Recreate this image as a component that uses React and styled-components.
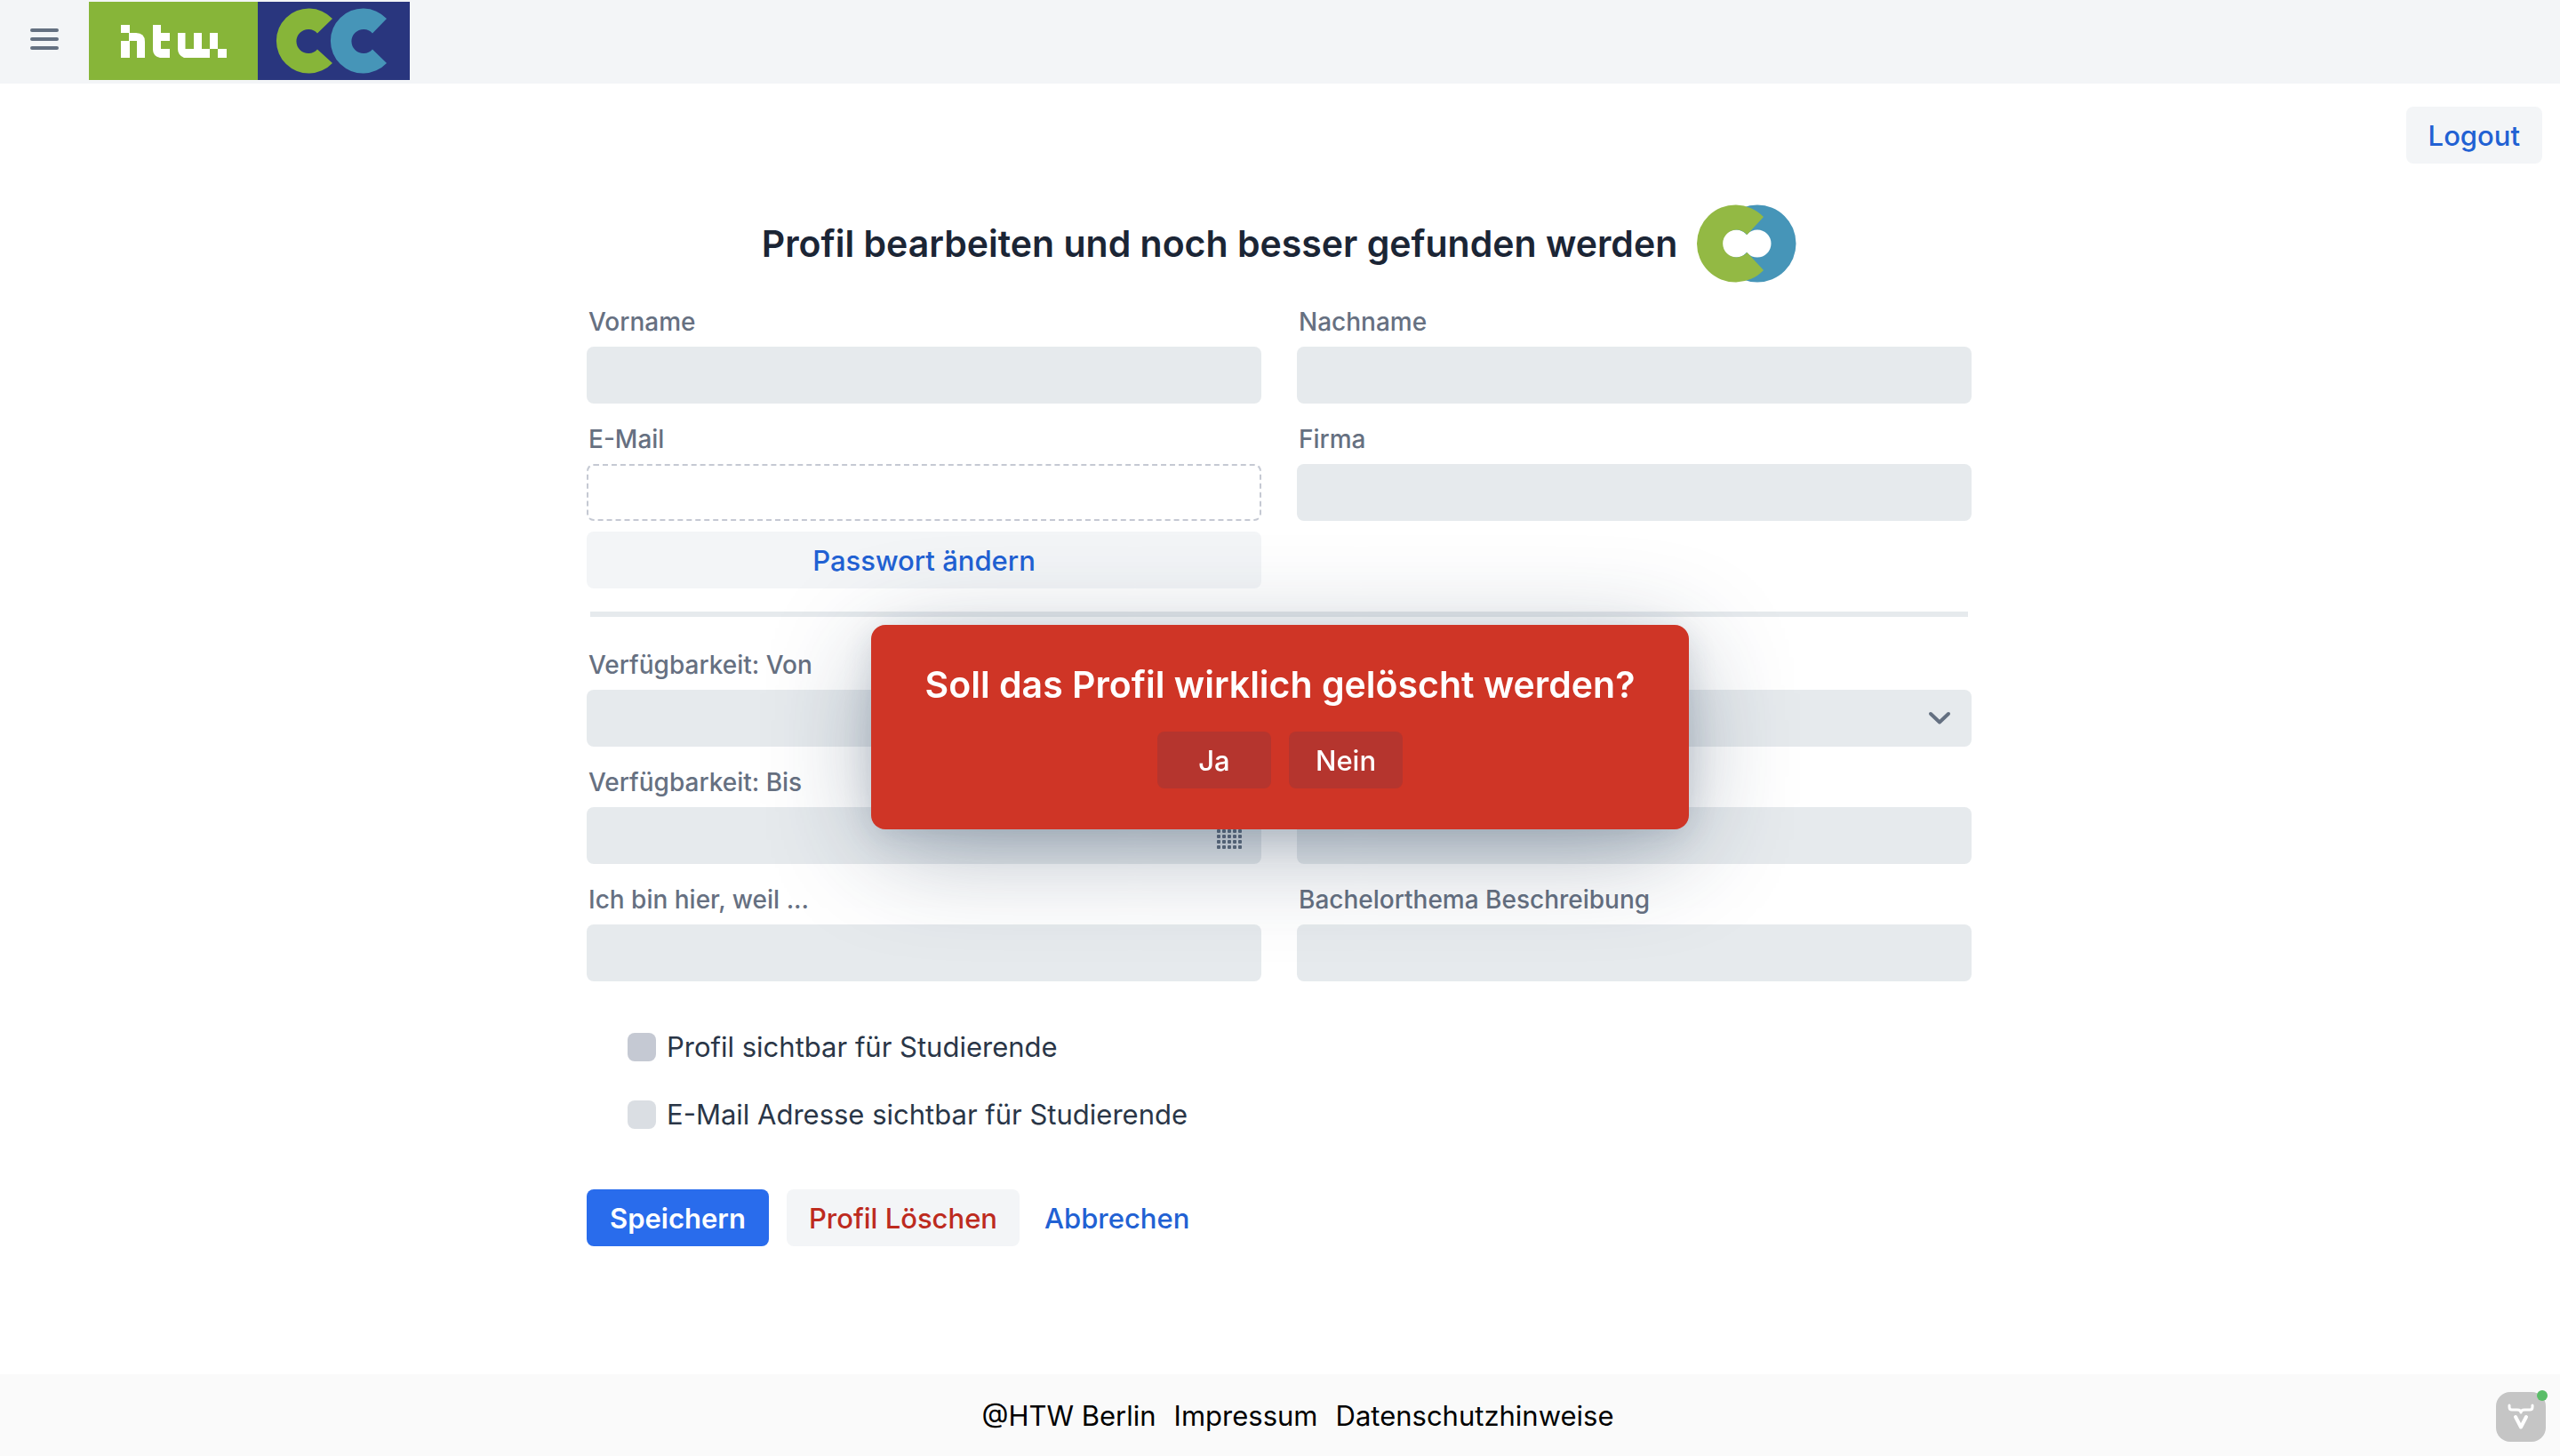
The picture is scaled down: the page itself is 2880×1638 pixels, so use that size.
import React, { useState } from "react";
import styled, { createGlobalStyle } from "styled-components";

const GlobalStyle = createGlobalStyle`
  *, *::before, *::after { box-sizing: border-box; }
  body {
    margin: 0;
    background: #fff;
    color: #2a3647;
    font-family: Inter, "Liberation Sans", sans-serif;
    font-size: 31px;
    line-height: 40px;
  }
  button, input, select { font: inherit; color: inherit; }
`;

const Page = styled.div`
  min-height: 100vh;
  display: flex;
  flex-direction: column;
`;

const Header = styled.header`
  display: flex;
  align-items: flex-start;
  gap: 28px;
  height: 94px;
  padding: 2px 28px;
  background: #f3f5f7;
`;

const MenuButton = styled.button`
  display: grid;
  place-items: center;
  width: 44px;
  height: 84px;
  padding: 0;
  border: 0;
  background: none;
  color: #647081;
`;

const LogoLink = styled.a`
  display: block;
  height: 88px;
`;

const Main = styled.main`
  flex: 1;
`;

const TopBar = styled.div`
  display: flex;
  justify-content: flex-end;
  padding: 26px 20px 0;
`;

const tones = {
  tertiary: { color: "#2161d3", background: "transparent", weight: 500 },
  normal: { color: "#2161d3", background: "#f3f5f7", weight: 500 },
  danger: { color: "#bd2b1e", background: "#f3f5f7", weight: 500 },
  primary: { color: "#fff", background: "#296cec", weight: 600 },
  overlay: { color: "#fff", background: "#b5352e", weight: 500 },
};

const Button = styled.button`
  height: 64px;
  min-width: ${(p) => p.$minWidth || "0"};
  padding: 2px ${(p) => p.$padding || "25px"} 0;
  border: 0;
  border-radius: 8px;
  color: ${(p) => tones[p.$tone || "normal"].color};
  background: ${(p) => tones[p.$tone || "normal"].background};
  font-weight: ${(p) => tones[p.$tone || "normal"].weight};
  white-space: nowrap;
  cursor: pointer;
`;

const Form = styled.form`
  max-width: 1560px;
  margin: 0 auto;
  padding-right: 2px;
`;

const TitleRow = styled.div`
  display: flex;
  justify-content: center;
  align-items: center;
  gap: 22px;
  margin: 46px 0 28px;
`;

const Title = styled.h1`
  margin: 0;
  color: #1b2535;
  font-size: 41px;
  line-height: 56px;
  font-weight: 600;
`;

const Fields = styled.div`
  display: grid;
  grid-template-columns: 1fr 1fr;
  gap: 24px 40px;
  align-items: start;
`;

const Field = styled.div`
  display: flex;
  flex-direction: column;
  gap: 12px;
`;

const Label = styled.label`
  height: 32px;
  padding-left: 2px;
  color: #667081;
  font-size: 28px;
  line-height: 32px;
  font-weight: 500;
`;

const Control = styled.div`
  display: flex;
  align-items: center;
  height: 64px;
  padding-right: 20px;
  border: ${(p) => (p.$readOnly ? "2px dashed #c5c9d3" : "0")};
  border-radius: 8px;
  background: ${(p) => (p.$readOnly ? "#fff" : "#e6eaed")};
  color: #647081;
`;

const Input = styled.input`
  flex: 1;
  min-width: 0;
  height: 100%;
  padding: 0 16px;
  border: 0;
  outline: 0;
  background: none;
`;

const Select = styled.select`
  flex: 1;
  min-width: 0;
  height: 100%;
  padding: 0 16px;
  border: 0;
  outline: 0;
  background: none;
  appearance: none;
`;

const Divider = styled.hr`
  height: 6px;
  margin: 26px 4px 38px;
  border: 0;
  background: #e6eaed;
`;

const Checks = styled.div`
  display: flex;
  flex-direction: column;
  gap: 36px;
  padding: 54px 46px 64px;
`;

const CheckLabel = styled.label`
  display: flex;
  align-items: center;
  gap: 12px;
`;

const Checkbox = styled.input`
  appearance: none;
  width: 32px;
  height: 32px;
  margin: 0;
  border-radius: 8px;
  background: ${(p) => (p.$strong ? "#c5c9d3" : "#dadee3")};
  &:checked { background: #296cec; }
`;

const Actions = styled.div`
  display: flex;
  gap: 20px;
`;

const Footer = styled.footer`
  display: flex;
  justify-content: center;
  align-items: center;
  gap: 20px;
  height: 92px;
  padding: 2px 0 0 40px;
  background: #fafafa;
  color: #000;
`;

const FooterLink = styled.a`
  color: inherit;
  text-decoration: none;
`;

const DevBadge = styled.button`
  position: fixed;
  right: 16px;
  bottom: 16px;
  width: 56px;
  height: 56px;
  padding: 0;
  border: 0;
  border-radius: 16px;
  background: #c5c5c5;
`;

const StatusDot = styled.span`
  position: absolute;
  top: -2px;
  right: -2px;
  width: 12px;
  height: 12px;
  border-radius: 50%;
  background: #5abd68;
`;

const Overlay = styled.div`
  position: fixed;
  inset: 0;
  display: flex;
  justify-content: center;
  align-items: center;
  padding-bottom: 2px;
  pointer-events: none;
`;

const Notification = styled.section`
  display: flex;
  flex-direction: column;
  align-items: center;
  gap: 26px;
  width: 920px;
  padding: 40px 20px 46px;
  border-radius: 16px;
  background: #cf3526;
  color: #fff;
  pointer-events: auto;
  box-shadow:
    0 8px 36px -4px hsla(214, 53%, 23%, 0.16),
    0 24px 124px -12px hsla(214, 47%, 21%, 0.42);
`;

const Question = styled.h2`
  margin: 0;
  font-size: 41px;
  line-height: 54px;
  font-weight: 600;
  white-space: nowrap;
`;

const MenuIcon = () => (
  <svg width="32" height="24" viewBox="0 0 32 24" stroke="currentColor" strokeWidth="4" strokeLinecap="round" aria-hidden="true">
    <path d="M2 2h28M2 12h28M2 22h28" />
  </svg>
);

const HeaderLogo = () => (
  <svg width="361" height="88" viewBox="100 2 361 88" role="img">
    <path fill="#87b539" d="M100 2h190v88H100z" />
    <path fill="#29367e" d="M290 2h171v88H290z" />
    <g fill="#fff">
      <path d="M136 28h10v9h-10zM136 46h10v19h-10z" />
      <path d="M145 37h8q10 0 10 10v18h-9V46h-9z" />
      <path d="M172 28h9v9h10v9h-10v9h10v10h-11q-8-2-8-9z" />
      <path d="M200 37h8.500v18H218V37h9v18h9V37h9v18h-9v10h-29q-7-3-7-10zM245 55h10v10h-10z" />
    </g>
    <path fill="#87b539" d="M374 21A36.500 36.500 0 1 0 374 71L357 55.500A13.500 13.500 0 1 1 357 37.500Z" />
    <path fill="#4695b8" d="M435 21A36.500 36.500 0 1 0 435 71L419 55.500A13.500 13.500 0 1 1 419 37.500Z" />
  </svg>
);

const TitleLogo = () => (
  <svg width="112" height="88" viewBox="0 0 112 88" aria-hidden="true">
    <path
      fill="#4695b8"
      fillRule="evenodd"
      d="M68 0.500a43.500 43.500 0 1 1 0 87a43.500 43.500 0 1 1 0-87zM68 28.500a15.500 15.500 0 1 0 0 31a15.500 15.500 0 1 0 0-31z"
    />
    <circle cx="44" cy="44" r="15.500" fill="#fff" />
    <path fill="#93b944" d="M75 14A43.500 43.500 0 1 0 75 74L56.500 54A15.500 15.500 0 1 1 56.500 34Z" />
  </svg>
);

const ChevronIcon = () => (
  <svg width="40" height="32" viewBox="0 0 40 32" fill="none" stroke="currentColor" strokeWidth="4" strokeLinecap="round" strokeLinejoin="round" aria-hidden="true">
    <path d="M14 11l10 9.500l10-9.500" />
  </svg>
);

const CalendarIcon = () => (
  <svg width="32" height="32" viewBox="0 0 32 32" fill="currentColor" aria-hidden="true">
    {[0, 1, 2, 3, 4].map((row) =>
      [0, 1, 2, 3, 4].map((col) => (
        <rect key={`${row}-${col}`} x={2 + col * 6} y={3 + row * 6} width="4" height="4" rx="1" />
      ))
    )}
  </svg>
);

const DevIcon = () => (
  <svg width="56" height="56" viewBox="0 0 56 56" fill="none" stroke="#fff" strokeLinecap="round" strokeLinejoin="round" aria-hidden="true">
    <path strokeWidth="3" d="M15 15v2q0 3 3 3h6q4 0 4 3q0-3 4-3h6q3 0 3-3v-2" />
    <path strokeWidth="4" d="M22 28l6 11.500l6-11.500" />
  </svg>
);

function TextField({ id, label, readOnly, ariaLabel, icon, children }) {
  return (
    <Field>
      <Label htmlFor={id}>{label}</Label>
      <Control $readOnly={readOnly}>
        <Input id={id} type="text" readOnly={readOnly} aria-label={ariaLabel} />
        {icon}
      </Control>
      {children}
    </Field>
  );
}

export default function App() {
  const [open, setOpen] = useState(true);
  return (
    <>
      <GlobalStyle />
      <Page>
        <Header>
          <MenuButton type="button" aria-label="Menü"><MenuIcon /></MenuButton>
          <LogoLink href="#" aria-label="HTW CC"><HeaderLogo /></LogoLink>
        </Header>
        <Main>
          <TopBar>
            <Button type="button">Logout</Button>
          </TopBar>
          <Form onSubmit={(e) => e.preventDefault()}>
            <TitleRow>
              <Title>Profil bearbeiten und noch besser gefunden werden</Title>
              <TitleLogo />
            </TitleRow>
            <Fields>
              <TextField id="vorname" label="Vorname" />
              <TextField id="nachname" label="Nachname" />
              <TextField id="email" label="E-Mail" readOnly>
                <Button type="button">Passwort ändern</Button>
              </TextField>
              <TextField id="firma" label="Firma" />
            </Fields>
            <Divider />
            <Fields>
              <TextField id="von" label="Verfügbarkeit: Von" icon={<CalendarIcon />} />
              <Field>
                <Label htmlFor="auswahl" />
                <Control>
                  <Select id="auswahl" aria-label="Auswahl" defaultValue="">
                    <option value="" />
                  </Select>
                  <ChevronIcon />
                </Control>
              </Field>
              <TextField id="bis" label="Verfügbarkeit: Bis" icon={<CalendarIcon />} />
              <TextField id="thema" ariaLabel="Bachelorthema" />
              <TextField id="motivation" label="Ich bin hier, weil ..." />
              <TextField id="beschreibung" label="Bachelorthema Beschreibung" />
            </Fields>
            <Checks>
              <CheckLabel>
                <Checkbox type="checkbox" $strong />
                Profil sichtbar für Studierende
              </CheckLabel>
              <CheckLabel>
                <Checkbox type="checkbox" />
                E-Mail Adresse sichtbar für Studierende
              </CheckLabel>
            </Checks>
            <Actions>
              <Button type="submit" $tone="primary" $padding="26px">Speichern</Button>
              <Button type="button" $tone="danger" onClick={() => setOpen(true)}>Profil Löschen</Button>
              <Button type="button" $tone="tertiary" $padding="8px">Abbrechen</Button>
            </Actions>
          </Form>
        </Main>
        <Footer>
          <span>@HTW Berlin</span>
          <FooterLink href="#">Impressum</FooterLink>
          <FooterLink href="#">Datenschutzhinweise</FooterLink>
        </Footer>
      </Page>
      <DevBadge type="button" aria-label="Vaadin">
        <DevIcon />
        <StatusDot />
      </DevBadge>
      {open && (
        <Overlay>
          <Notification role="alertdialog" aria-labelledby="frage">
            <Question id="frage">Soll das Profil wirklich gelöscht werden?</Question>
            <Actions>
              <Button type="button" $tone="overlay" $minWidth="128px" onClick={() => setOpen(false)}>Ja</Button>
              <Button type="button" $tone="overlay" $minWidth="128px" onClick={() => setOpen(false)}>Nein</Button>
            </Actions>
          </Notification>
        </Overlay>
      )}
    </>
  );
}
